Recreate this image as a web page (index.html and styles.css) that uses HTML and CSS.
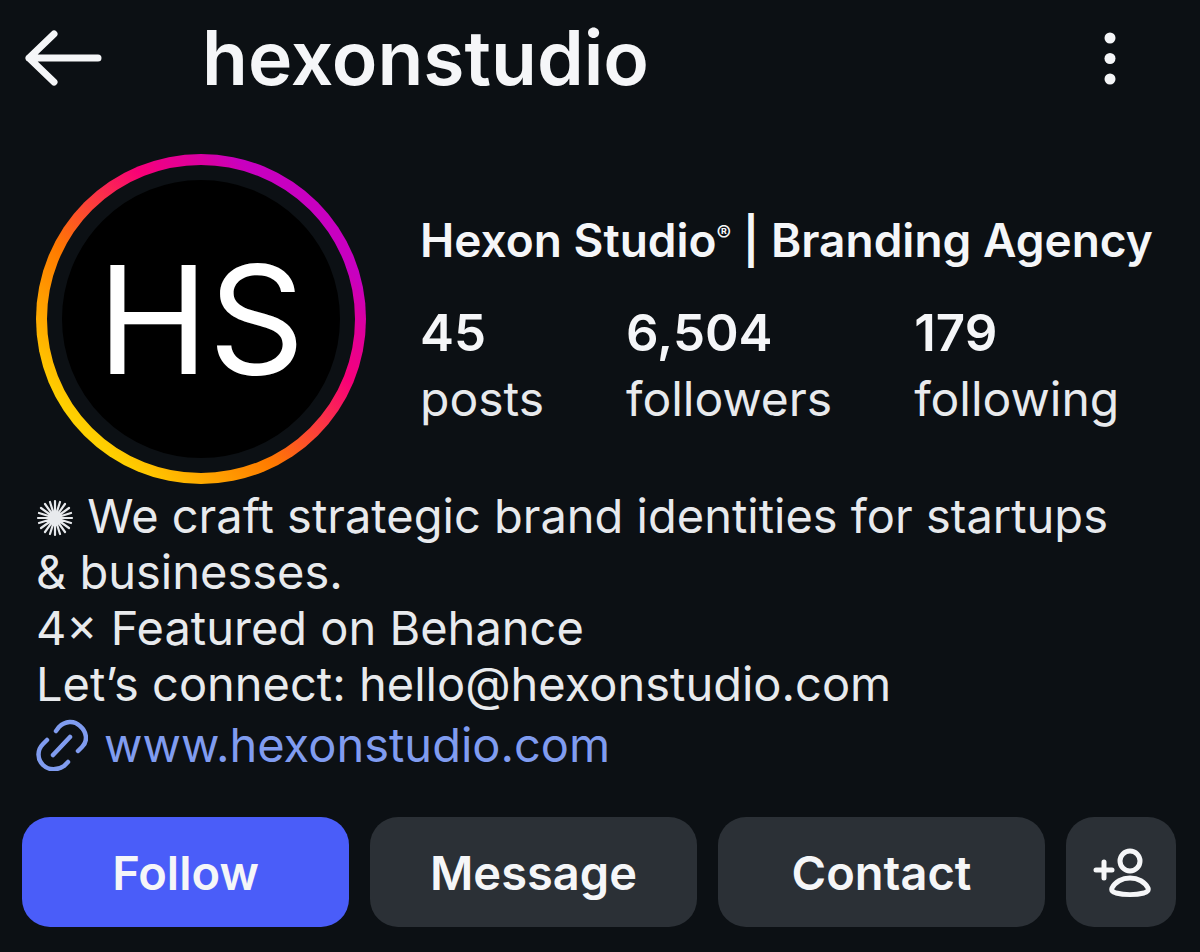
FILE: index.html
```html
<!DOCTYPE html>
<html lang="en">
  <head>
    <meta charset="UTF-8" />
    <meta name="viewport" content="width=device-width, initial-scale=1.0" />
    <title>hexonstudio</title>
    <link rel="stylesheet" href="styles.css">
  </head>
  <body>
    <header class="topbar">
      <button class="icon-btn" aria-label="Back">
        <svg width="80" height="60" viewBox="0 0 80 60" fill="none" stroke="currentColor" stroke-width="7" stroke-linecap="round" stroke-linejoin="round">
          <path d="M74 30H5M30 6L5 30L30 54" />
        </svg>
      </button>
      <h1 class="username">hexonstudio</h1>
      <button class="icon-btn" aria-label="More options">
        <svg width="12" height="60" viewBox="0 0 12 60" fill="currentColor">
          <circle cx="6" cy="10" r="5.5" />
          <circle cx="6" cy="30.5" r="5.5" />
          <circle cx="6" cy="51" r="5.5" />
        </svg>
      </button>
    </header>

    <main class="profile">
      <section class="summary">
        <div class="ring">
          <div class="avatar">HS</div>
        </div>
        <div class="info">
          <h2 class="name">Hexon Studio<sup>®</sup> | Branding Agency</h2>
          <ul class="stats">
            <li><strong>45</strong><span>posts</span></li>
            <li><strong>6,504</strong><span>followers</span></li>
            <li><strong>179</strong><span>following</span></li>
          </ul>
        </div>
      </section>

      <section class="bio">
        <p>
          <svg class="burst" width="38" height="38" viewBox="-19 -19 38 38" stroke="currentColor" stroke-width="2.2" stroke-linecap="round">
            <path d="M0-17V17M-17 0H17M-5-16L5 16M5-16L-5 16M-10-14L10 14M10-14L-10 14M-14-10L14 10M14-10L-14 10M-16-5L16 5M16-5L-16 5" />
            <circle r="4" fill="currentColor" />
          </svg>
          We craft strategic brand identities for startups &amp;&nbsp;businesses.
        </p>
        <p>4× Featured on Behance</p>
        <p>Let’s connect: hello@hexonstudio.com</p>
        <a class="link" href="#">
          <svg width="52" height="52" viewBox="0 0 52 52" fill="none" stroke="currentColor" stroke-width="4.5" stroke-linecap="round">
            <path d="M20 12L23 8C29 2 38 1 44 7C51 13 52 22 46 28L42 32M11 21L7 25C1 31 1 40 7 46C13 52 22 51 28 47L32 43M17 36L34 18" />
          </svg>
          www.hexonstudio.com
        </a>
      </section>

      <div class="actions">
        <button class="btn btn-follow">Follow</button>
        <button class="btn">Message</button>
        <button class="btn">Contact</button>
        <button class="btn btn-add" aria-label="Suggested accounts">
          <svg width="60" height="52" viewBox="0 0 60 52" fill="none" stroke="currentColor" stroke-width="5" stroke-linecap="round" stroke-linejoin="round">
            <path d="M5 24H21M13 16V32" />
            <circle cx="39" cy="15" r="10" />
            <path d="M39 32C31 32 24 36 21 42C20 45 22 46 25 47C33 49 45 49 53 47C56 46 58 45 57 42C54 36 47 32 39 32Z" />
          </svg>
        </button>
      </div>
    </main>
  </body>
</html>
```

FILE: styles.css
```css
* {
  box-sizing: border-box;
}
body {
  margin: 0;
  background: #0c1014;
  color: #f5f6f8;
  font-family: Inter, "Liberation Sans", sans-serif;
}
h1,
h2,
p,
ul {
  margin: 0;
  padding: 0;
}
button {
  border: 0;
  font-family: inherit;
  color: inherit;
  cursor: pointer;
}
svg {
  flex: none;
}
.topbar {
  display: flex;
  align-items: center;
  height: 116px;
  padding: 0 84px 0 24px;
}
.icon-btn {
  display: flex;
  padding: 0;
  background: none;
}
.username {
  flex: 1;
  padding-left: 98px;
  font-size: 75px;
  font-weight: 600;
  line-height: 88px;
}
.profile {
  padding: 38px 24px 24px 22px;
}
.summary {
  display: flex;
  align-items: center;
  gap: 54px;
  padding-left: 14px;
}
.ring {
  flex: none;
  width: 330px;
  height: 330px;
  padding: 11px;
  border-radius: 50%;
  background: linear-gradient(225deg, #c800c0 20%, #d800a4 25%, #f80078 37%, #ff7a00 61%, #ffa800 74%, #ffd000 84%);
}
.avatar {
  display: flex;
  align-items: center;
  justify-content: center;
  height: 100%;
  border: 15px solid #0c1014;
  border-radius: 50%;
  background: #000;
  color: #fff;
  font-size: 150px;
}
.info {
  flex: 1;
  padding-top: 6px;
}
.name {
  font-size: 46px;
  font-weight: 600;
  line-height: 56px;
  white-space: nowrap;
}
.name sup {
  font-size: 22px;
  line-height: 0;
}
.stats {
  display: flex;
  gap: 82px;
  margin-top: 32px;
  list-style: none;
}
.stats strong,
.stats span {
  display: block;
  line-height: 66px;
}
.stats strong {
  font-size: 51px;
  font-weight: 600;
}
.stats span {
  color: #e8eaed;
  font-size: 48px;
}
.bio {
  padding: 4px 14px 0;
  color: #e8eaed;
  font-size: 47px;
  line-height: 56px;
}
.burst {
  vertical-align: -4px;
}
.link {
  display: flex;
  align-items: center;
  gap: 16px;
  margin-top: 5px;
  color: #809cf0;
  text-decoration: none;
}
.actions {
  display: flex;
  gap: 21px;
  margin-top: 44px;
}
.btn {
  flex: 1;
  height: 110px;
  border-radius: 28px;
  background: #2b3036;
  font-size: 47px;
  font-weight: 600;
}
.btn-follow {
  background: #4a5df9;
}
.btn-add {
  display: flex;
  flex: 0 0 110px;
  align-items: center;
  justify-content: center;
  padding: 0;
}
```
